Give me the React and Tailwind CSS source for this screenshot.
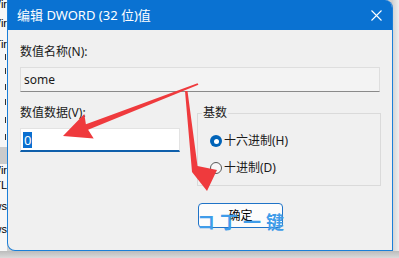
import React from "react";

function LeftStrip() {
  const Row = ({ h, t, cls = "" }) => (
    <div className={`flex justify-end overflow-hidden whitespace-nowrap text-[11px] text-black ${cls}`} style={{ height: h, lineHeight: `${h}px` }}>
      {t}
    </div>
  );
  const Mark = ({ h }) => (
    <div className="flex justify-end items-center pr-[1px]" style={{ height: h }}>
      <div className="w-[1px] h-[6px] bg-[#333]" />
    </div>
  );
  return (
    <div className="w-[7px] flex flex-col bg-[#f7f7f7] font-['Liberation_Sans',sans-serif]">
      <Row h={9} t="Wir" />
      <div className="h-[6px]" />
      <Row h={16} t="Wir" />
      <div className="h-[5px]" />
      <Row h={16} t="Tir" />
      <Mark h={10} />
      <Mark h={18} />
      <Mark h={13} />
      <Mark h={17} />
      <Mark h={20} />
      <Mark h={13} />
      <div className="h-[4px]" />
      <div className="h-[17px] bg-[#cbcbcb]" />
      <Row h={12} t="Wir" />
      <div className="h-[3px]" />
      <Row h={12} t="TL" />
      <div className="h-[9px]" />
      <Row h={12} t="ws" />
      <div className="h-[11px]" />
      <Row h={12} t="ws" />
    </div>
  );
}

function Radio({ checked, label }) {
  return (
    <div className="flex items-center h-[16px] gap-[2px]">
      {checked ? (
        <div className="w-[12px] h-[12px] rounded-full bg-[#0063b8] flex items-center justify-center">
          <div className="w-[5px] h-[5px] rounded-full bg-white" />
        </div>
      ) : (
        <div className="w-[12px] h-[12px] rounded-full border border-[#5a5a5a] bg-[#f7f7f7]" />
      )}
      <span className="text-[12px] leading-[16px] text-[#1a1a1a]">{label}</span>
    </div>
  );
}

function Window() {
  return (
    <div className="w-[386px] h-[251px] flex flex-col rounded-tr-[8px] rounded-bl-[8px] overflow-hidden border-x border-b border-[#1b7fd8] bg-[#f0f0f0]">
      <div className="h-[30px] shrink-0 bg-[#0a72d2] flex items-center justify-between pl-[9px] pr-[10px]">
        <span className="text-white text-[13px] leading-[16px]">编辑 DWORD (32 位)值</span>
        <svg width="11" height="11" viewBox="0 0 11 11">
          <path d="M0.5 0.5 L10.5 10.5 M10.5 0.5 L0.5 10.5" stroke="white" strokeWidth="1.1" fill="none" />
        </svg>
      </div>
      <div className="flex flex-col pl-[12px] pr-[11px] pt-[14px]">
        <div className="text-[12px] leading-[16px] text-[#1a1a1a]">数值名称(N):</div>
        <div className="mt-[7px] w-[360px] h-[25px] border border-[#dedede] border-b-[#8a8a8a] bg-[#f3f3f3] flex items-center pl-[3px]">
          <span className="text-[12px] leading-[16px] text-[#1a1a1a]">some</span>
        </div>
        <div className="mt-[13px] flex">
          <div className="w-[160px] flex flex-col">
            <div className="text-[12px] leading-[16px] text-[#1a1a1a]">数值数据(V):</div>
            <div className="mt-[7px] h-[24px] bg-white border border-[#e3e3e3] border-b-2 border-b-[#0f5fab] flex items-center pl-[2px]">
              <span className="bg-[#0a6fd0] text-white text-[13px] leading-[16px] px-[1px]">0</span>
            </div>
          </div>
          <fieldset className="ml-[17px] w-[184px] border border-[#dadada] m-0 p-0">
            <legend className="ml-[4px] px-[1px] text-[12px] leading-[16px] text-[#1a1a1a]">基数</legend>
            <div className="flex flex-col pl-[12px] pt-[12px] pb-[9px] gap-[11px]">
              <Radio checked label="十六进制(H)" />
              <Radio label="十进制(D)" />
            </div>
          </fieldset>
        </div>
        <div className="mt-[17px] ml-[178px] w-[85px] h-[25px] rounded-[4px] border border-[#1f73c7] bg-[#fcfcfc] flex items-center justify-center">
          <span className="text-[12px] leading-[16px] text-black">确定</span>
        </div>
      </div>
    </div>
  );
}

export default function App() {
  return (
    <div className="relative w-[399px] h-[258px] overflow-hidden flex flex-col bg-[#cfcfcf] font-['Noto_Sans','Noto_Sans_CJK_SC',sans-serif]">
      <div className="flex h-[251px]">
        <LeftStrip />
        <Window />
        <div className="flex-1 bg-gradient-to-r from-[#d5d5d5] to-[#efefef]" />
      </div>
      <div className="flex-1 bg-gradient-to-b from-[#bcbcbc] to-[#dadada]" />

      <div className="absolute left-[197px] top-[212px] text-[#3f9ce9] text-[18px] leading-[20px] tracking-[5px] font-bold pointer-events-none">
        コ丁一键
      </div>

      <svg className="absolute inset-0 pointer-events-none" width="399" height="258" viewBox="0 0 399 258">
        <polygon
          fill="#ef3a3d"
          points="63,136 93.7,138.5 88.1,129.8 198.4,84.7 197.6,83.3 85.9,124.2 84.3,114"
        />
        <polygon
          fill="#ef3a3d"
          points="185,91 187.5,91 197.5,166 217,170 207,191 192,172 191.5,166"
        />
      </svg>
    </div>
  );
}
